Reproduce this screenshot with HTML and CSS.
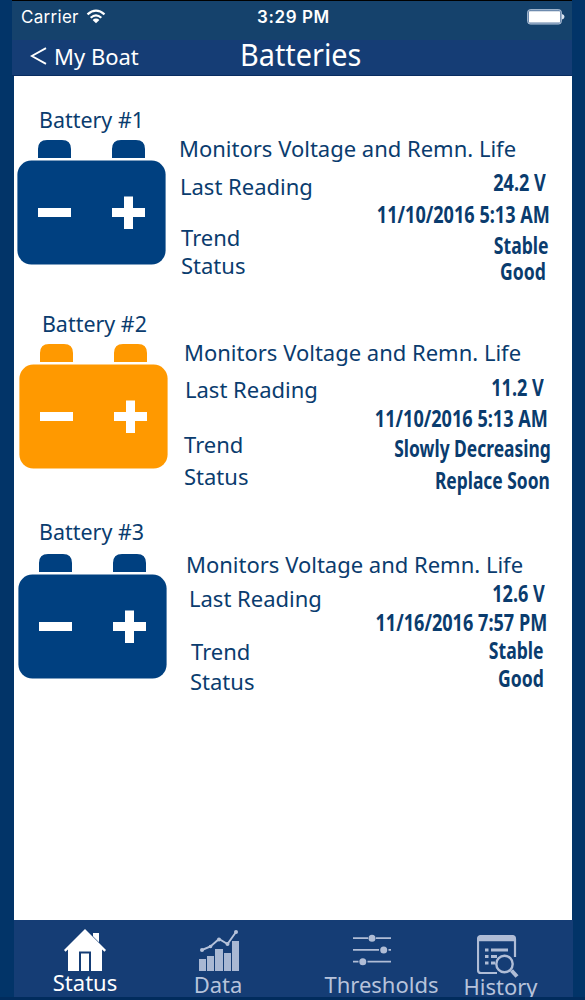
FILE: index.html
```html
<!DOCTYPE html>
<html lang="en">
<head>
<meta charset="utf-8">
<title>Batteries</title>
<link rel="stylesheet" href="styles.css">
</head>
<body>
<svg class="defs" width="0" height="0">
  <symbol id="battery" viewBox="0 0 149 125">
    <path d="M21 18V9q0-9 9-9h15q9 0 9 9v9zM95 18V9q0-9 9-9h15q9 0 9 9v9z"/>
    <rect x=".4" y="20.6" width="148.2" height="104" rx="14"/>
    <path fill="#fff" d="M21 68h33v9H21zM95 68h12V56.500h9V68h12v9h-12v12h-9V77H95z"/>
  </symbol>
</svg>
<div class="phone">
  <header>
    <div class="statusbar">
      <span class="carrier">Carrier</span>
      <svg class="wifi" viewBox="0 0 20 15" width="20" height="15" fill="none" stroke="#fff" stroke-width="2.200">
        <path d="M1.500 5.400Q10-2.200 18.500 5.400M4.700 8.700q5.300-4.700 10.600 0"/>
        <path fill="#fff" stroke="none" d="M6.600 11q3.400-2.800 6.800 0L10 14.300z"/>
      </svg>
      <span class="time">3:29 PM</span>
      <svg class="charge" viewBox="0 0 38 16" width="38" height="16">
        <rect x=".7" y=".7" width="33.600" height="14.300" rx="2.500" fill="#5d7da3" stroke="#b9c9dd" stroke-width="1"/>
        <rect x="2" y="2.300" width="31" height="11.200" rx=".5" fill="#fff"/>
        <path d="M35 5q2.500.5 2.500 2.700T35 10.500z" fill="#dbe5f2"/>
      </svg>
    </div>
    <nav class="navbar">
      <a class="back"><svg viewBox="0 0 17 18" width="17" height="18" fill="none" stroke="#fff" stroke-width="1.900"><path d="M16 1.200 1.800 9 16 16.800"/></svg><span>My Boat</span></a>
      <h1>Batteries</h1>
    </nav>
  </header>
  <main>
    <section class="card one">
      <div class="unit"><h2>Battery #1</h2><svg class="cell" width="149" height="125"><use href="#battery"/></svg></div>
      <div class="info">
        <p class="desc">Monitors Voltage and Remn. Life</p>
        <div class="facts">
          <div class="labels"><span>Last Reading</span><span>Trend</span><span>Status</span></div>
          <div class="values"><span>24.2 V</span><span>11/10/2016 5:13 AM</span><span>Stable</span><span>Good</span></div>
        </div>
      </div>
    </section>
    <section class="card two">
      <div class="unit"><h2>Battery #2</h2><svg class="cell" width="149" height="125"><use href="#battery"/></svg></div>
      <div class="info">
        <p class="desc">Monitors Voltage and Remn. Life</p>
        <div class="facts">
          <div class="labels"><span>Last Reading</span><span>Trend</span><span>Status</span></div>
          <div class="values"><span>11.2 V</span><span>11/10/2016 5:13 AM</span><span>Slowly Decreasing</span><span>Replace Soon</span></div>
        </div>
      </div>
    </section>
    <section class="card three">
      <div class="unit"><h2>Battery #3</h2><svg class="cell" width="149" height="125"><use href="#battery"/></svg></div>
      <div class="info">
        <p class="desc">Monitors Voltage and Remn. Life</p>
        <div class="facts">
          <div class="labels"><span>Last Reading</span><span>Trend</span><span>Status</span></div>
          <div class="values"><span>12.6 V</span><span>11/16/2016 7:57 PM</span><span>Stable</span><span>Good</span></div>
        </div>
      </div>
    </section>
  </main>
  <footer>
    <a class="tab status">
      <svg viewBox="0 0 42 42" width="42" height="42" fill="#fff">
        <path d="M21 0 42 21l-1.500 1.800L38 20.500V42H27V22.500H15V42H4V20.500L1.500 22.800 0 21z"/>
        <path d="M29 4h6v9.300l-6-6zM17 24.500h8V42h-8z"/>
      </svg>
      <span>Status</span>
    </a>
    <a class="tab data">
      <svg viewBox="0 0 41 41" width="41" height="41" fill="#a9b8d3">
        <path d="M0 29h7v12H0zM8 26h7v15H8zM16 19h8v22h-8zM25 23h7v18h-7zM33 11h7v30h-7z"/>
        <path d="m3 20 8.500-3.500L20 9l8.500 5L37 2" fill="none" stroke="#b5c2da" stroke-width="1.900"/>
        <g fill="#b5c2da"><circle cx="3" cy="20" r="2"/><circle cx="11.500" cy="16.500" r="1.800"/><circle cx="20" cy="9.500" r="2"/><circle cx="28.500" cy="14" r="2"/><circle cx="37" cy="2" r="2"/></g>
      </svg>
      <span>Data</span>
    </a>
    <a class="tab thresholds">
      <svg viewBox="0 0 38 32" width="38" height="32" fill="#b0bdd6">
        <path d="M0 3.200h15V5H0zM23 3.200h15V5H23zM0 15h26v1.800H0zM35.500 15H38v1.800h-2.500zM0 26.800h5.500v1.800H0zM14.500 26.800H38v1.800H14.500z"/>
        <circle cx="19" cy="4.200" r="3.500"/><circle cx="30.700" cy="16" r="3.500"/><circle cx="9.800" cy="27.700" r="3.500"/>
      </svg>
      <span>Thresholds</span>
    </a>
    <a class="tab history">
      <svg viewBox="0 0 42 43" width="42" height="43" fill="none" stroke="#b0bdd6" stroke-width="2.200">
        <path d="M20 38H4q-3 0-3-3V4q0-3 3-3h31q3 0 3 3v18"/>
        <path d="M2 4h35" stroke-width="4.500"/>
        <path d="M8 15h3.500M14 15h17M8 21.500h3.500M14 21.500h6M8 28h3.500M14 28h4" stroke-width="3"/>
        <circle cx="27.500" cy="29" r="8.200" stroke-width="2.400"/>
        <path d="m34.500 35.500 5.500 6" stroke-width="4"/>
      </svg>
      <span>History</span>
    </a>
  </footer>
</div>
</body>
</html>
```
FILE: styles.css
```css
* { box-sizing: border-box; }
body {
  margin: 0;
  background: #023468;
  color: #0a3c6e;
  font: 22px/20px "Noto Sans", "Open Sans", sans-serif;
}
h1, h2, p { margin: 0; font-weight: 400; }
.defs { display: block; }
.phone {
  width: 585px;
  height: 1000px;
  padding: 0 12px;
  display: flex;
  flex-direction: column;
  border-bottom: 3px solid #012c5d;
  overflow: hidden;
}

/* header */
header {
  height: 76px;
  width: 560px;
  background: #153d75;
  border-top: 1px solid #000;
  border-bottom: 1px solid #082c60;
  color: #fff;
}
.statusbar {
  display: grid;
  grid-template-columns: 65px 171px 1fr 45px;
  height: 39px;
  padding: 6px 0 0 9px;
  background: #15426c;
  font: 17px/20px Inter, sans-serif;
}
.carrier { letter-spacing: .3px; }
.wifi { margin-top: 2px; }
.time { font-weight: 600; letter-spacing: .6px; }
.charge { margin-top: 2px; }
.navbar {
  display: grid;
  grid-template-columns: 210px 1fr;
  height: 35px;
  padding-left: 18px;
}
.back { display: flex; gap: 7px; padding-top: 6px; }
.back svg { margin-top: 1px; }
h1 {
  font-size: 31px;
  line-height: 28px;
  transform: scaleX(.93);
  transform-origin: left;
}

/* battery cards */
main {
  width: 558px;
  height: 844px;
  margin-left: 2px;
  padding-top: 33px;
  background: #fff;
}
.card { display: flex; }
.one { height: 204px; fill: #004080; }
.two { height: 208px; fill: #ff9900; }
.three { height: 200px; fill: #004080; }
.unit { width: 164px; padding-left: 3px; }
.two .unit { padding-left: 5px; }
.three .unit { padding-left: 4px; }
.cell { display: block; margin-top: 11px; }
.three .cell { margin-top: 13px; }
h2 {
  padding-left: 22px;
  font-size: 22px;
  line-height: 20px;
  white-space: nowrap;
  transform: scaleX(.975);
  transform-origin: 20px 0;
}
.two h2 { padding-left: 23px; }
.three h2 { padding-left: 21px; }
.info { flex: 1; }
.desc { white-space: nowrap; }
.facts { display: flex; justify-content: space-between; }
.labels, .values { display: flex; flex-direction: column; white-space: nowrap; }
.values { align-items: flex-end; font-weight: 700; font-size: 23px; }
.values span { transform: scaleX(.765); transform-origin: right; }
.values span:nth-child(1), .values span:nth-child(2) { transform: scaleX(.787); }

.one .info { padding: 29px 0 0 1px; }
.one .labels span:nth-child(1) { margin: 18px 0 0 1px; }
.one .labels span:nth-child(2) { margin: 31px 0 0 2px; }
.one .labels span:nth-child(3) { margin: 8px 0 0 2px; }
.one .values span:nth-child(1) { margin: 14px 26px 0 0; }
.one .values span:nth-child(2) { margin: 12px 22px 0 0; }
.one .values span:nth-child(3) { margin: 11px 23px 0 0; }
.one .values span:nth-child(4) { margin: 6px 26px 0 0; }

.two .info { padding: 29px 0 0 6px; }
.two .labels span:nth-child(1) { margin: 17px 0 0 1px; }
.two .labels span:nth-child(2) { margin: 35px 0 0 0; }
.two .labels span:nth-child(3) { margin: 12px 0 0 0; }
.two .values span:nth-child(1) { margin: 15px 28px 0 0; }
.two .values span:nth-child(2) { margin: 11px 24px 0 0; }
.two .values span:nth-child(3) { margin: 10px 21px 0 0; }
.two .values span:nth-child(4) { margin: 12px 22px 0 0; }
.two .values span:nth-child(n+3) { transform: scaleX(.757); }

.three .info { padding: 33px 0 0 8px; }
.three .labels span:nth-child(1) { margin: 14px 0 0 3px; }
.three .labels span:nth-child(2) { margin: 33px 0 0 5px; }
.three .labels span:nth-child(3) { margin: 10px 0 0 4px; }
.three .values span:nth-child(1) { margin: 9px 27px 0 0; }
.three .values span:nth-child(2) { margin: 9px 25px 0 0; }
.three .values span:nth-child(3) { margin: 8px 28px 0 0; }
.three .values span:nth-child(4) { margin: 8px 28px 0 0; }

/* tab bar */
footer {
  display: grid;
  grid-template-columns: 142px 124px 173px 95px;
  width: 559px;
  height: 77px;
  margin-left: 2px;
  background: #153d75;
  color: #b7c3db;
}
.tab { display: flex; flex-direction: column; align-items: center; }
.tab svg { display: block; flex: none; }
.status { color: #fff; padding-top: 9px; }
.status span { margin-top: 1px; }
.data { padding-top: 10px; }
.data svg { margin-left: 2px; }
.data span { margin-top: 3px; }
.thresholds { padding-top: 14px; margin-left: 30px; }
.thresholds svg { margin-right: 20px; }
.thresholds span { margin-top: 8px; }
.history { padding-top: 15px; }
.history svg { margin-right: 6px; }
.history span { margin-top: -2px; }
```
